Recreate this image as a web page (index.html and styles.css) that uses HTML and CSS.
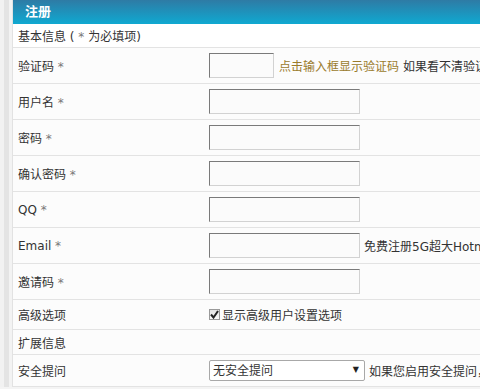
FILE: index.html
```html
<!DOCTYPE html>
<html lang="zh-CN">
<head>
    <meta charset="UTF-8">
    <title>注册</title>
    <link rel="stylesheet" href="styles.css">
</head>
<body>
    <div class="page">
        <div class="side"></div>
        <div class="main">
            <div class="title">注册</div>

            <div class="row row-info">
                <div class="label">基本信息 ( <span class="star">*</span> 为必填项)</div>
            </div>

            <div class="row row-field">
                <div class="label">验证码 <span class="star">*</span></div>
                <div class="field">
                    <input type="text" class="txt txt-short">
                    <span class="hint">点击输入框显示验证码</span>
                    <span class="note">如果看不清验证码，请点击刷新</span>
                </div>
            </div>

            <div class="row row-field">
                <div class="label">用户名 <span class="star">*</span></div>
                <div class="field"><input type="text" class="txt"></div>
            </div>

            <div class="row row-field">
                <div class="label">密码 <span class="star">*</span></div>
                <div class="field"><input type="password" class="txt"></div>
            </div>

            <div class="row row-field">
                <div class="label">确认密码 <span class="star">*</span></div>
                <div class="field"><input type="password" class="txt"></div>
            </div>

            <div class="row row-field">
                <div class="label">QQ <span class="star">*</span></div>
                <div class="field"><input type="text" class="txt"></div>
            </div>

            <div class="row row-field">
                <div class="label">Email <span class="star">*</span></div>
                <div class="field">
                    <input type="text" class="txt">
                    <span class="note">免费注册5G超大Hotmail邮箱</span>
                </div>
            </div>

            <div class="row row-field">
                <div class="label">邀请码 <span class="star">*</span></div>
                <div class="field"><input type="text" class="txt"></div>
            </div>

            <div class="row row-check">
                <div class="label">高级选项</div>
                <div class="field">
                    <span class="checkbox">
                        <svg width="9" height="9" viewBox="0 0 9 9"><path d="M1 4.5 L3.5 7.5 L8 1" fill="none" stroke="#222" stroke-width="2"/></svg>
                    </span>
                    <span class="check-text">显示高级用户设置选项</span>
                </div>
            </div>

            <div class="row row-ext">
                <div class="label">扩展信息</div>
            </div>

            <div class="row row-question">
                <div class="label">安全提问</div>
                <div class="field">
                    <div class="select-wrap">
                        <select class="select">
                            <option>无安全提问</option>
                        </select>
                    </div>
                    <span class="note">如果您启用安全提问，登录时需填入相应的项目才能登录</span>
                </div>
            </div>
        </div>
    </div>
</body>
</html>
```

FILE: styles.css
```css
body {
    margin: 0;
    overflow: hidden;
    font-family: "DejaVu Sans", "Noto Sans CJK SC", sans-serif;
    font-size: 12px;
    color: #333;
    background: #f4f4f4;
}
.page {
    display: flex;
    width: 760px;
}
.side {
    width: 13px;
    flex-shrink: 0;
    background: linear-gradient(to right, #f2f2f2 0, #f2f2f2 4px, #e4e4e4 4px, #e4e4e4 9px, #f3f3f3 9px);
    border-right: 1px solid #e2e2e2;
    box-sizing: border-box;
}
.main {
    flex: 1;
    background: #fcfcfc;
}
.title {
    height: 24px;
    line-height: 24px;
    padding-left: 12px;
    color: #fff;
    font-weight: bold;
    font-size: 13px;
    background: linear-gradient(to bottom, #2e7ba5, #0fa9d1);
}
.row {
    display: grid;
    grid-template-columns: 196px 1fr;
    align-items: center;
    border-bottom: 1px solid #e3e3e3;
    box-sizing: border-box;
}
.row-info {
    height: 24px;
    background: #fff;
}
.row-field {
    height: 36px;
}
.row-check {
    height: 30px;
}
.row-ext {
    height: 25px;
}
.row-question {
    height: 32px;
}
.label {
    padding-left: 5px;
    white-space: nowrap;
}
.star {
    color: #777;
}
.field {
    display: flex;
    align-items: center;
    white-space: nowrap;
}
.txt {
    width: 151px;
    height: 25px;
    box-sizing: border-box;
    margin: 0;
    border: 1px solid;
    border-color: #7a7a7a #d2d2d2 #d2d2d2 #7a7a7a;
    background: #fbfbfb;
}
.txt-short {
    width: 65px;
}
.hint {
    margin-left: 5px;
    color: #9a7b2c;
}
.note {
    margin-left: 4px;
}
.checkbox {
    width: 11px;
    height: 11px;
    box-sizing: border-box;
    border: 1px solid #9a9a9a;
    background: linear-gradient(to bottom, #e2e2e2, #fafafa);
    display: flex;
    align-items: center;
    justify-content: center;
}
.check-text {
    margin-left: 2px;
}
.select-wrap {
    position: relative;
    width: 156px;
    height: 21px;
}
.select {
    appearance: none;
    width: 100%;
    height: 100%;
    margin: 0;
    padding: 0 3px;
    border: 1px solid #a8a8a8;
    border-radius: 2px;
    background: #fff;
    font-family: "DejaVu Sans", "Noto Sans CJK SC", sans-serif;
    font-size: 12px;
    color: #333;
}
.select-wrap::after {
    content: "▼";
    position: absolute;
    right: 6px;
    top: 5px;
    font-size: 8px;
    color: #222;
    pointer-events: none;
}
```
